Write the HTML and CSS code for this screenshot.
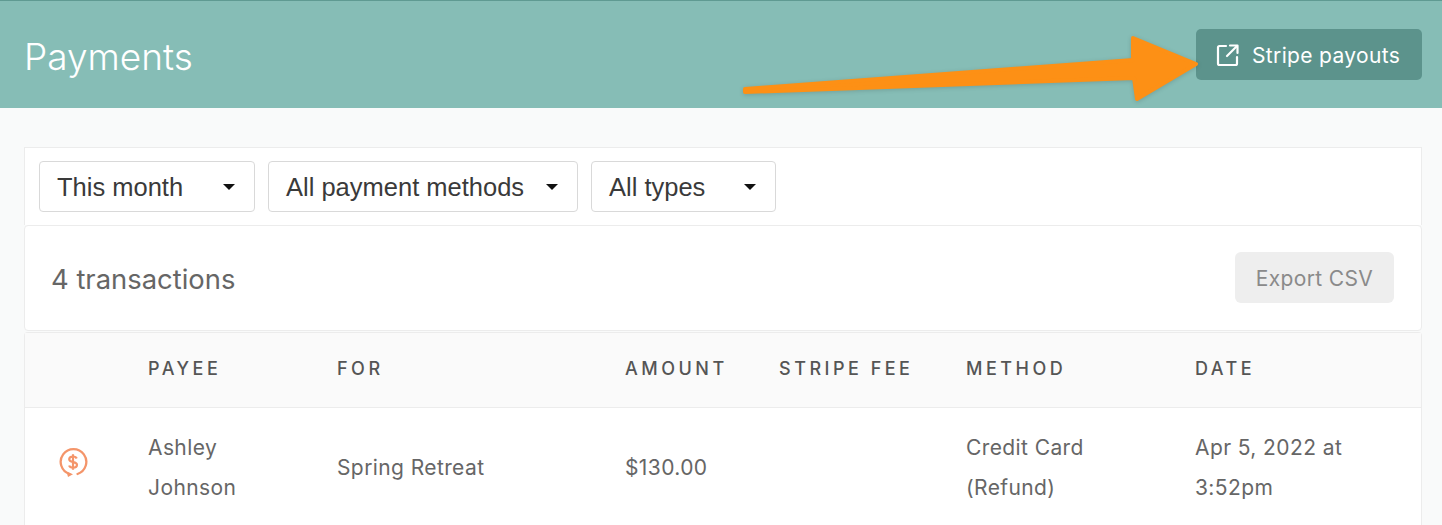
FILE: index.html
```html
<!DOCTYPE html>
<html lang="en">
<head>
<meta charset="utf-8">
<title>Payments</title>
<link rel="stylesheet" href="styles.css">
</head>
<body>
<header class="topbar">
  <h1 class="title">Payments</h1>
  <a class="payouts" href="#">
    <svg class="ext-icon" viewBox="0 0 24 24" width="24" height="24" fill="none" stroke="#fff" stroke-width="2.200" stroke-linecap="round" stroke-linejoin="round"><path d="M10 3H3.500A1.500 1.500 0 0 0 2 4.500v16A1.500 1.500 0 0 0 3.500 22h16a1.500 1.500 0 0 0 1.500-1.500V14"/><path d="M11 13L21 3"/><path d="M14 2.500h7.500V10"/></svg>
    <span class="payouts-label">Stripe payouts</span>
  </a>
  <svg class="arrow" viewBox="0 0 470 80" width="470" height="80"><path d="M5 59L393 30L393 8L456 34L397 69L394 48L5 62Z" fill="#fd9015" stroke="#fd9015" stroke-width="4" stroke-linejoin="round"/></svg>
</header>
<main class="content">
  <section class="filters">
    <div class="select s1"><span>This month</span><i class="caret"></i></div>
    <div class="select s2"><span>All payment methods</span><i class="caret"></i></div>
    <div class="select s3"><span>All types</span><i class="caret"></i></div>
  </section>
  <section class="summary">
    <div class="count">4 transactions</div>
    <button class="export" type="button">Export CSV</button>
  </section>
  <section class="table-card">
    <table class="tx">
      <colgroup><col class="c0"><col class="c1"><col class="c2"><col class="c3"><col class="c4"><col class="c5"><col class="c6"></colgroup>
      <thead>
        <tr><th></th><th>PAYEE</th><th>FOR</th><th>AMOUNT</th><th>STRIPE FEE</th><th>METHOD</th><th>DATE</th></tr>
      </thead>
      <tbody>
        <tr>
          <td class="icon-cell"><svg class="refund-icon" viewBox="0 0 30 30" width="30" height="30" fill="none" stroke="#f4956a" stroke-width="2.300"><path d="M11.500 27A12.800 12.800 0 1 1 19.500 27" stroke-linecap="round"/><path d="M8.500 24.500L15 27.200L10 30Z" fill="#f4956a" stroke="none"/><path d="M18.700 11.500c-.5-1.300-1.800-2-3.700-2-2.200 0-3.800 1.100-3.800 2.800 0 3.900 7.800 1.900 7.800 5.500 0 1.800-1.700 2.900-4 2.900-2 0-3.400-.8-3.900-2.200M15 7.200v15.600" stroke-width="2.200"/></svg></td>
          <td>Ashley Johnson</td>
          <td>Spring Retreat</td>
          <td>$130.00</td>
          <td></td>
          <td>Credit Card (Refund)</td>
          <td>Apr 5, 2022 at 3:52pm</td>
        </tr>
      </tbody>
    </table>
  </section>
</main>
</body>
</html>
```

FILE: styles.css
```css
* { box-sizing: border-box; }
html, body { margin: 0; height: 525px; overflow: hidden; }
body { background: #f9fafa; font-family: Inter, "Liberation Sans", sans-serif; color: #555; }

.topbar {
  position: relative;
  height: 108px;
  background: #86bdb6;
  border-top: 1px solid #5f9a92;
  display: flex;
  align-items: center;
  justify-content: space-between;
  padding: 0 20px 0 24px;
}
.title { margin: 3px 0 0; font-size: 37px; font-weight: 300; color: #fff; line-height: 1; }
.payouts {
  width: 226px;
  height: 51px;
  background: #5c938c;
  border-radius: 5px;
  color: #fff;
  display: flex;
  align-items: center;
  gap: 12px;
  padding-left: 20px;
  font-size: 21px;
  text-decoration: none;
  letter-spacing: .35px;
}
.payouts-label { padding-top: 2px; }
.ext-icon { flex: none; }
.arrow { position: absolute; left: 740px; top: 29px; filter: drop-shadow(0 1px 2px rgba(0,0,0,.15)); }

.content { padding: 39px 20px 0 24px; }
.filters {
  height: 78px;
  background: #fff;
  border: 1px solid #ececec;
  border-bottom: 0;
  display: flex;
  gap: 13px;
  padding: 13px 14px;
}
.select {
  height: 51px;
  background: #fff;
  border: 1px solid #d9d9d9;
  border-radius: 4px;
  display: flex;
  align-items: center;
  justify-content: space-between;
  padding: 2px 19px 0 17px;
  font-family: "Liberation Sans", Arial, sans-serif;
  font-size: 25.500px;
  color: #3a3a3a;
}
.s1 { width: 216px; }
.s2 { width: 310px; }
.s3 { width: 185px; }
.caret { width: 0; height: 0; margin-top: -2px; border-left: 6.500px solid transparent; border-right: 6.500px solid transparent; border-top: 6.500px solid #111; }

.summary {
  height: 106px;
  background: #fff;
  border: 1px solid #ececec;
  border-radius: 4px;
  display: flex;
  align-items: center;
  justify-content: space-between;
  padding: 0 27px 2px 26px;
}
.count { font-size: 27.400px; color: #666; padding-top: 4px; }
.export {
  width: 159px;
  height: 51px;
  border: 0;
  border-radius: 6px;
  background: #eee;
  color: #8a8a8a;
  font: 400 21px Inter, sans-serif;
  letter-spacing: .35px;
  padding: 2px 0 0;
}

.table-card {
  margin-top: 1px;
  height: 200px;
  background: #fff;
  border: 1px solid #ececec;
  border-bottom: 0;
  border-radius: 4px 4px 0 0;
}
.tx { width: 100%; border-collapse: collapse; table-layout: fixed; }
.c0 { width: 123px; } .c1 { width: 189px; } .c2 { width: 288px; } .c3 { width: 154px; }
.c4 { width: 187px; } .c5 { width: 229px; } .c6 { width: auto; }
.tx th {
  height: 74px;
  background: #fafafa;
  border-bottom: 1px solid #ececec;
  text-align: left;
  font-size: 18px;
  font-weight: 500;
  letter-spacing: 3.500px;
  color: #555;
  padding: 0 0 2px;
}
.tx td { padding: 20px 40px 16px 0; font-size: 21px; line-height: 40px; color: #666; letter-spacing: .4px; vertical-align: middle; }
.tx td.icon-cell { padding: 0 0 3px 33px; line-height: 0; }
.refund-icon { position: relative; top: -2px; }
```
